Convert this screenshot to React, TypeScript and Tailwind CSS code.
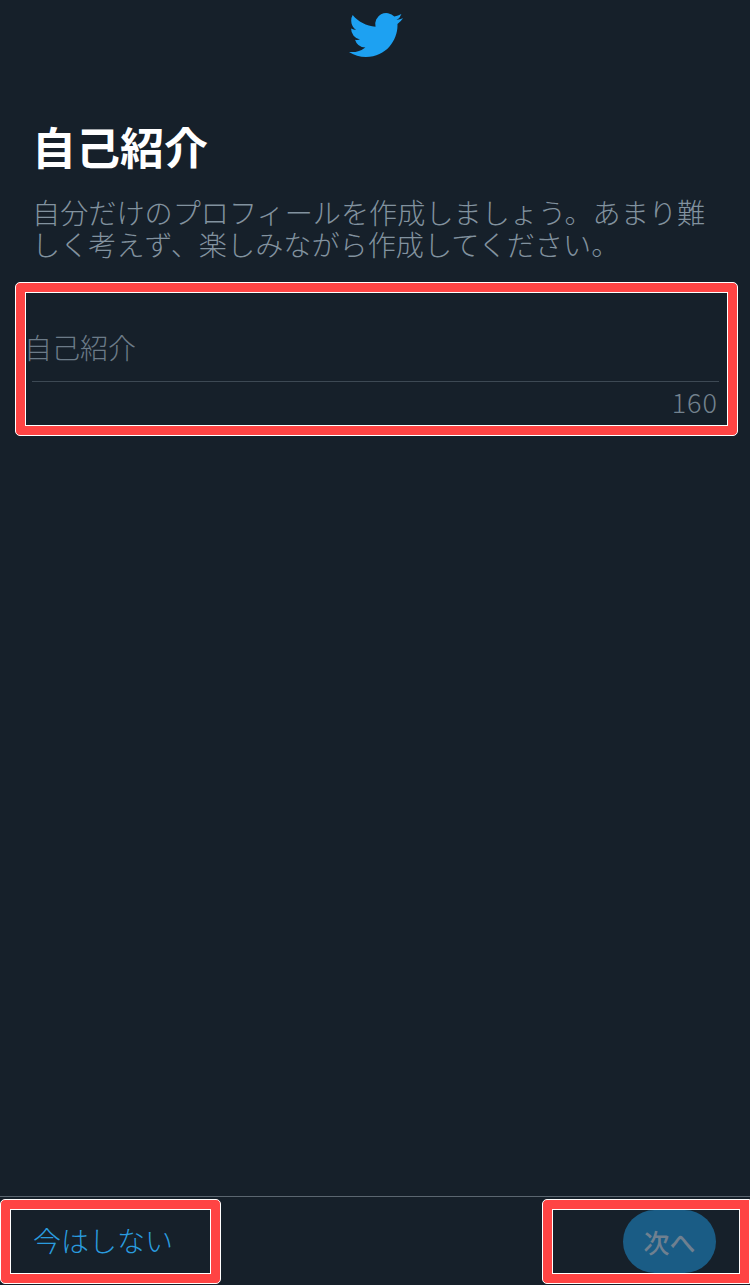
const TWITTER = "M23.953 4.57a10 10 0 01-2.825.775 4.958 4.958 0 002.163-2.723c-.951.555-2.005.959-3.127 1.184a4.92 4.92 0 00-8.384 4.482C7.69 8.095 4.067 6.13 1.64 3.162a4.822 4.822 0 00-.666 2.475c0 1.71.87 3.213 2.188 4.096a4.904 4.904 0 01-2.228-.616v.06a4.923 4.923 0 003.946 4.827 4.996 4.996 0 01-2.212.085 4.936 4.936 0 004.604 3.417 9.867 9.867 0 01-6.102 2.105c-.39 0-.779-.023-1.17-.067a13.995 13.995 0 007.557 2.209c9.053 0 13.998-7.496 13.998-13.985 0-.21 0-.42-.015-.63A9.935 9.935 0 0024 4.59z";

function Marked({ className, children }: { className: string; children: React.ReactNode }) {
  return (
    <div className={`rounded-[5px] border border-white bg-[#ff4444] p-[9px] ${className}`}>
      <div className="h-full w-full border border-white bg-[#16202a]">{children}</div>
    </div>
  );
}

export default function App() {
  return (
    <div
      className="flex h-[1285px] w-[750px] flex-col overflow-hidden bg-[#16202a]"
      style={{ fontFamily: '"Noto Sans CJK JP", "Liberation Sans", sans-serif' }}
    >
      <div className="flex h-[71px] justify-center pt-[8px] pl-[2px]">
        <svg viewBox="0 0 24 24" className="h-[54px] w-[54px]" fill="#1da1f2" aria-hidden="true">
          <path d={TWITTER} />
        </svg>
      </div>
      <h1 className="mt-[45px] pl-[32px] text-[44px] leading-[60px] font-bold text-white">自己紹介</h1>
      <p className="mt-[20px] w-[720px] pl-[32px] text-[28.15px] leading-[32px] font-light text-[#82929f]">
        自分だけのプロフィールを作成しましょう。あまり難しく考えず、楽しみながら作成してください。
      </p>
      <Marked className="mt-[22px] ml-[15px] h-[154px] w-[723px]">
        <div className="flex h-full flex-col">
          <div className="-ml-[2px] flex h-[88px] items-end pb-[14px] text-[28px] leading-[40px] font-light text-[#6c7b88]">
            自己紹介
          </div>
          <div className="ml-[6px] mr-[8px] border-t border-[#3d4954] pt-[3px] pr-[1px] text-right text-[27px] leading-[34px] font-light tracking-[1px] text-[#73828e]">
            160
          </div>
        </div>
      </Marked>
      <div className="flex-1" />
      <div className="h-px bg-[#5b6670]" />
      <div className="flex h-[88px] items-end justify-between pb-px">
        <Marked className="ml-0 h-[85px] w-[221px]">
          <div className="flex h-full items-center pb-[3px] pl-[22px] text-[28px] font-light text-[#2a9bdf]">今はしない</div>
        </Marked>
        <Marked className="h-[85px] w-[208px] rounded-r-none">
          <div className="flex h-full justify-end overflow-hidden pr-[23px]">
            <div className="flex h-[63px] w-[93px] items-center justify-center rounded-full bg-[#1a5c85] text-[26px] font-medium text-[#6f8090]">
              次へ
            </div>
          </div>
        </Marked>
      </div>
    </div>
  );
}
